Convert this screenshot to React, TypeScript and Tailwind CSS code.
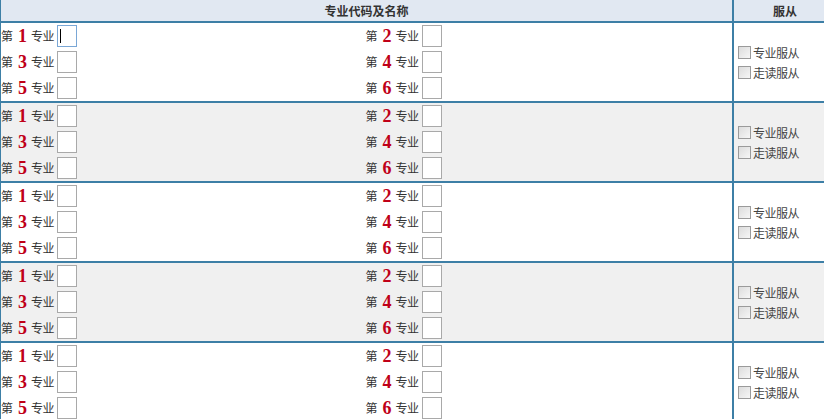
import React from 'react';

const font = { fontFamily: '"Noto Sans CJK SC", "Liberation Sans", sans-serif' };

function MajorSlot({ n, focused }: { n: number; focused?: boolean }) {
  return (
    <div className="flex items-center h-[22px] text-[12px] text-[#333]">
      <span className="w-[14px] -ml-[1px]">第</span>
      <span className="w-[15px] text-center text-[18px] leading-none font-bold text-[#c00018] font-['Liberation_Serif',serif]">{n}</span>
      <span className="ml-[1px] w-[26px] tracking-[-0.5px]">专业</span>
      <div
        className={`relative w-[20px] h-[22px] bg-white border ${
          focused ? 'border-[#7aa7d6]' : 'border-[#a9a9a9]'
        }`}
      >
        {focused && <span className="absolute left-[2px] top-[3px] w-[1px] h-[14px] bg-black" />}
      </div>
    </div>
  );
}

function Group({ shaded, first }: { shaded: boolean; first?: boolean }) {
  return (
    <div className={`flex border-b-2 border-[#3d7fa6] ${shaded ? 'bg-[#f0f0f0]' : 'bg-white'}`}>
      <div className="w-[733px] border-r-2 border-[#3d7fa6] grid grid-cols-2 pt-[2px] pb-[2px]">
        <div className="flex flex-col gap-[4px] pl-[1px]">
          <MajorSlot n={1} focused={first} />
          <MajorSlot n={3} />
          <MajorSlot n={5} />
        </div>
        <div className="flex flex-col gap-[4px]">
          <MajorSlot n={2} />
          <MajorSlot n={4} />
          <MajorSlot n={6} />
        </div>
      </div>
      <div className="flex-1 flex flex-col justify-center gap-[7px] pl-[4px] pt-[1px] text-[12px] text-[#444]">
        {['专业服从', '走读服从'].map((label) => (
          <label key={label} className="flex items-center h-[13px] leading-none tracking-[-0.5px]">
            <span className="w-[13px] h-[13px] border border-[#9a9a9a] bg-gradient-to-br from-[#dcdcdc] to-[#f6f6f6] mr-[2px]" />
            {label}
          </label>
        ))}
      </div>
    </div>
  );
}

export default function App() {
  const groups = [false, true, false, true, false];
  return (
    <div className="w-[824px] h-[419px] overflow-hidden bg-white" style={font}>
      <div className="border-l border-[#3d7fa6]">
        {/* Header */}
        <div className="flex h-[23px] bg-[#e1e8f2] border-b-2 border-[#3d7fa6] text-[12px] font-bold text-[#333]">
          <div className="w-[733px] border-r-2 border-[#3d7fa6] flex items-center justify-center">专业代码及名称</div>
          <div className="flex-1 flex items-center justify-center pl-[12px]">服从</div>
        </div>
        {groups.map((shaded, i) => (
          <Group key={i} shaded={shaded} first={i === 0} />
        ))}
      </div>
    </div>
  );
}
